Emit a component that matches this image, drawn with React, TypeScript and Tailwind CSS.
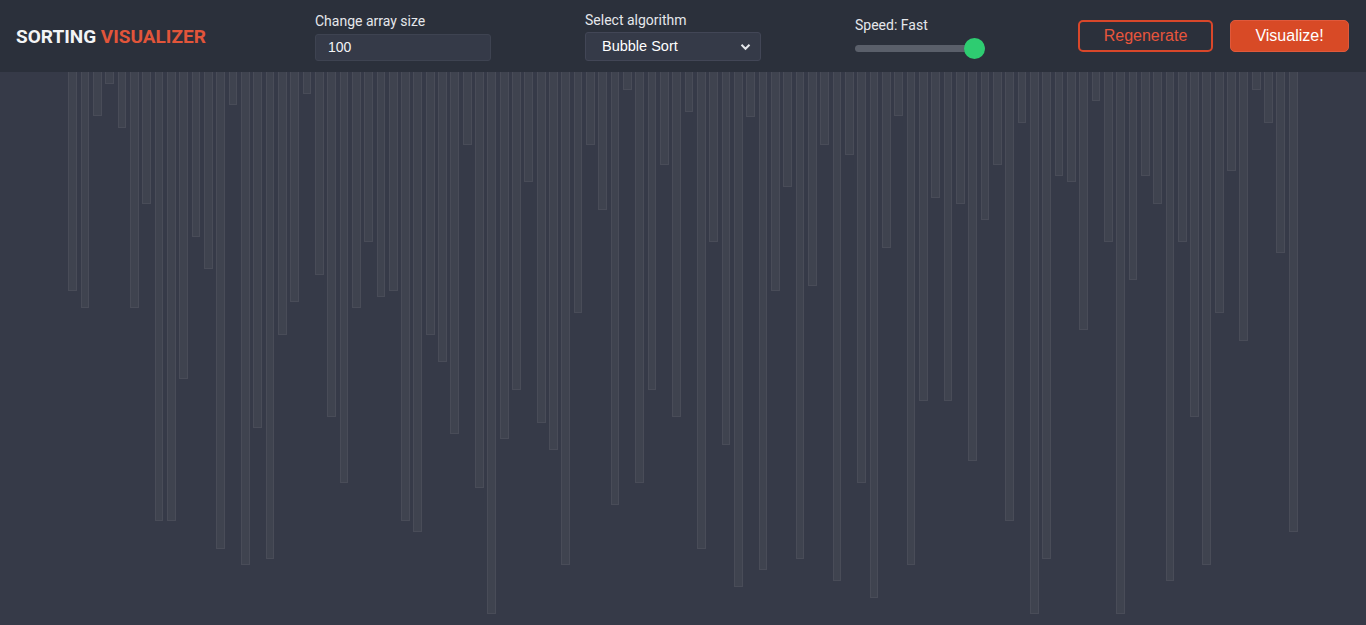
import React from "react";

const heights = [
  219, 236, 44, 12, 56, 236, 132, 449, 449, 307,
  165, 197, 477, 33, 493, 356, 487, 263, 230, 22,
  203, 345, 411, 236, 170, 225, 219, 449, 460, 263,
  290, 362, 73, 416, 542, 367, 318, 110, 351, 378,
  493, 241, 73, 138, 433, 18, 411, 318, 93, 345,
  40, 477, 170, 373, 515, 45, 498, 219, 115, 487,
  214, 73, 509, 83, 411, 526, 176, 44, 493, 329,
  126, 329, 132, 389, 148, 93, 449, 51, 542, 487,
  104, 110, 258, 29, 170, 542, 208, 104, 132, 509,
  170, 345, 493, 241, 99, 269, 18, 51, 181, 460,
];

export default function App() {
  return (
    <div className="min-h-screen bg-[#363a48] font-['Roboto',_'Liberation_Sans',_sans-serif] overflow-hidden">
      <header className="h-[72px] bg-[#2b303b] flex items-center pl-4">
        <div className="w-[299px] shrink-0 text-[19px] font-bold leading-none pt-[1px]">
          <span className="text-[#f3f4f6]">SORTING </span>
          <span className="text-[#e2553a]">VISUALIZER</span>
        </div>

        <div className="w-[176px] shrink-0 flex flex-col pt-[1px]">
          <span className="text-[14px] leading-[18px] text-[#e5e7eb] mb-[4px]">Change array size</span>
          <div className="h-[27px] bg-[#353a48] border border-[#3e4351] rounded-[3px] flex items-center pl-[12px] text-[14px] text-[#f3f4f6] font-['Liberation_Sans',_Arial,_sans-serif]">
            100
          </div>
        </div>

        <div className="w-[176px] shrink-0 ml-[94px] flex flex-col">
          <span className="text-[14px] leading-[18px] text-[#e5e7eb] mb-[3px]">Select algorithm</span>
          <div className="h-[29px] bg-[#353a48] border border-[#424656] rounded-[3px] flex items-center justify-between pl-[16px] pr-[9px] pt-[1px] text-[14.5px] text-white font-['Liberation_Sans',_Arial,_sans-serif]">
            <span>Bubble Sort</span>
            <svg width="11" height="8" viewBox="0 0 11 8" fill="none">
              <path d="M1.5 1.8 L5.5 5.8 L9.5 1.8" stroke="#e5e7eb" strokeWidth="2" />
            </svg>
          </div>
        </div>

        <div className="w-[130px] shrink-0 ml-[94px] flex flex-col pt-[2px]">
          <span className="text-[14px] leading-[18px] text-[#e5e7eb] mb-[4px]">Speed: Fast</span>
          <div className="relative h-[21px] flex items-center">
            <div className="w-full h-[7px] rounded-full bg-[#5a5f6a]"></div>
            <div className="absolute right-0 top-0 w-[21px] h-[21px] rounded-full bg-[#2ecc71]"></div>
          </div>
        </div>

        <div className="ml-[93px] flex items-center gap-[17px] font-['Liberation_Sans',_Arial,_sans-serif]">
          <button className="w-[135px] h-[32px] border-2 border-[#d9472a] rounded-[5px] text-[16px] text-[#e8553b] bg-transparent">
            Regenerate
          </button>
          <button className="w-[119px] h-[32px] border border-[#e0593b] rounded-[5px] text-[16px] text-white bg-[#d84a26]">
            Visualize!
          </button>
        </div>
      </header>

      <main className="w-[90%] mx-auto flex items-start gap-[3.6px] h-[553px]">
        {heights.map((h, i) => (
          <div
            key={i}
            className="flex-1 bg-[#3f434f] border border-t-0 border-[#52566282]"
            style={{ height: `${h}px` }}
          />
        ))}
      </main>
    </div>
  );
}
